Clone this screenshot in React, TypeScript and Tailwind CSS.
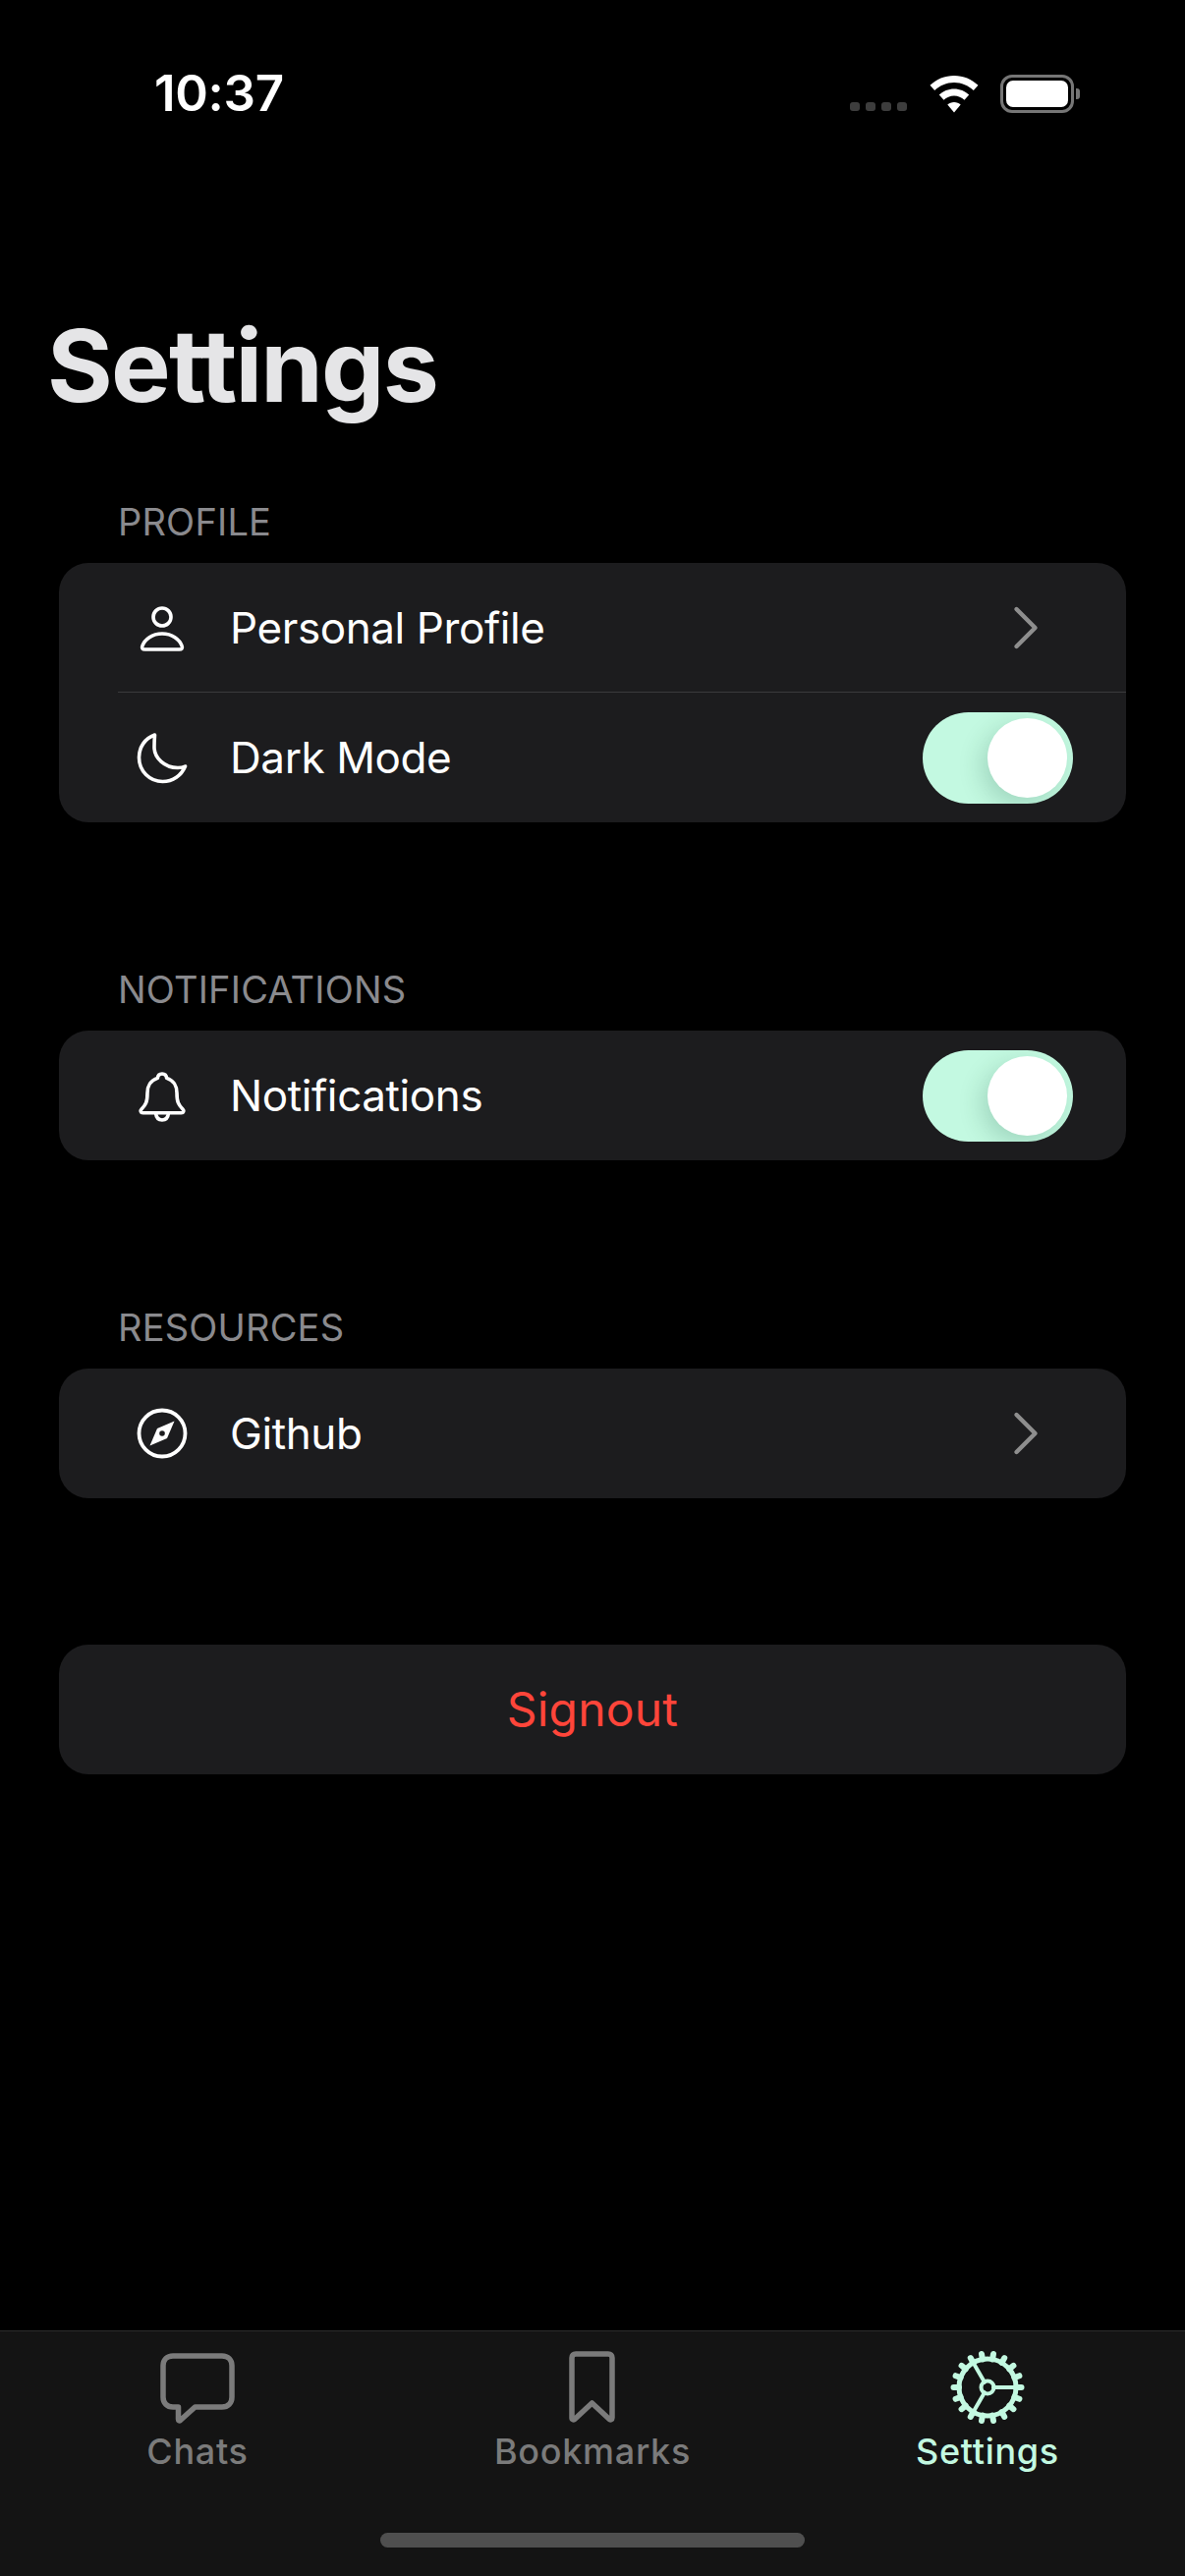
import React from "react";
import { ChevronRight } from "lucide-react";

const PersonIcon = () => (
  <svg width="60" height="60" viewBox="0 0 60 60" fill="none" stroke="#fff" strokeWidth="3.600">
    <circle cx="30" cy="19" r="9" />
    <path d="M12.500 52c-2.500 0-3.500-1.400-2.700-3.400C12.300 41.500 20 36 30 36s17.700 5.500 20.200 12.600c.8 2-.2 3.400-2.700 3.400z" />
  </svg>
);

const MoonIcon = () => (
  <svg width="60" height="60" viewBox="0 0 60 60" fill="none" stroke="#fff" strokeWidth="3.600" strokeLinejoin="round">
    <path d="M22.500 7C12.500 10.500 6.500 19.500 6.500 30c0 14 11 24.500 24 24.500 10.500 0 19-6 23-15.500-1.500.8-4.500 1.500-7.500 1.500-13.500 0-24-10-24-21 0-4.500 .2-8.500.5-12.500z" />
  </svg>
);

const BellIcon = () => (
  <svg width="60" height="60" viewBox="0 0 60 60" fill="none" stroke="#fff" strokeWidth="3.600" strokeLinejoin="round">
    <path d="M30 8c2.600 0 4.400 1.800 4.600 4.400C41.500 14.500 45 20.500 45 27.500c0 9 1.500 12 6 16.500 1.500 1.500 1 3.800-1.500 3.800h-39C8 47.800 7.500 45.500 9 44c4.500-4.500 6-7.500 6-16.500 0-7 3.500-13 10.400-15.100C25.600 9.800 27.400 8 30 8z" />
    <path d="M23.500 48c.5 4.500 3 7 6.500 7s6-2.500 6.500-7" />
  </svg>
);

const CompassIcon = () => (
  <svg width="60" height="60" viewBox="0 0 60 60" fill="none">
    <circle cx="30" cy="30" r="23.500" stroke="#fff" strokeWidth="3.800" />
    <path d="M42.500 17.500 L35 35 L17.500 42.500 L25 25 Z" fill="#fff" />
    <circle cx="30" cy="30" r="2.800" fill="#1c1c1e" />
  </svg>
);

const Toggle = () => (
  <div className="relative h-[93px] w-[153px] overflow-hidden rounded-full bg-[#c3f9e1]">
    <div className="absolute left-[66px] top-[6px] h-[81px] w-[81px] rounded-full bg-white shadow-[-6px_8px_24px_rgba(0,60,40,0.18)]" />
  </div>
);

const Row = ({ icon, label, right, divider }: { icon: React.ReactNode; label: string; right?: React.ReactNode; divider?: boolean }) => (
  <div className="relative flex h-[132px] items-center pl-[75px] pr-[54px]">
    {icon}
    <span className="ml-[39px] flex-1 text-[44px] tracking-[-0.4px] text-white">{label}</span>
    {right}
    {divider && <div className="absolute bottom-0 left-[60px] right-0 h-px bg-[#3a3a3c]" />}
  </div>
);

const Chevron = () => (
  <div className="mr-[18px] flex h-[60px] w-[60px] items-center justify-center">
    <ChevronRight size={76} strokeWidth={1.4} color="#8e8e8e" className="shrink-0" />
  </div>
);

const Section = ({ title, children }: { title: string; children: React.ReactNode }) => (
  <div>
    <div className="h-[66px] pl-[60px] text-[38px] leading-[48px] tracking-[0.2px] text-[#8a8a8e]">{title}</div>
    <div className="overflow-hidden rounded-[30px] bg-[#1c1c1e]">{children}</div>
  </div>
);

const gearAngles = Array.from({ length: 18 }, (_, i) => i * 20);

const GearIcon = () => (
  <svg width="76" height="76" viewBox="-38 -38 76 76" fill="none" stroke="#c3f9e1" strokeWidth="4.500" strokeLinecap="round">
    <circle r="29" strokeWidth="5" />
    {gearAngles.map((a) => (
      <path key={a} d="M29 0H34.500" strokeWidth="6" transform={`rotate(${a})`} />
    ))}
    <circle r="6.500" strokeWidth="4" />
    <path d="M6 0H28" strokeWidth="4" />
    <path d="M6 0H28" strokeWidth="4" transform="rotate(120)" />
    <path d="M6 0H28" strokeWidth="4" transform="rotate(240)" />
  </svg>
);

const ChatIcon = () => (
  <svg width="76" height="76" viewBox="0 0 76 76" fill="none" stroke="#7b7b7b" strokeWidth="5.500" strokeLinejoin="round">
    <path d="M13 6h50c6 0 10 4 10 10v32c0 6-4 10-10 10H35.500L20.500 71.500c-1 .8-2 .3-2-1V58H13c-6 0-10-4-10-10V16c0-6 4-10 10-10z" />
  </svg>
);

const BookmarkIcon = () => (
  <svg width="76" height="76" viewBox="0 0 76 76" fill="none" stroke="#7b7b7b" strokeWidth="5.500" strokeLinejoin="round">
    <path d="M21 4h33c2.500 0 4 1.500 4 4v61c0 1.800-1.800 2.500-3 1.300L37.500 54 20 70.300c-1.200 1.200-3 .5-3-1.300V8c0-2.500 1.500-4 4-4z" />
  </svg>
);

const Tab = ({ icon, label, active }: { icon: React.ReactNode; label: string; active?: boolean }) => (
  <div className="flex w-[402px] flex-col items-center">
    {icon}
    <span className={`mt-[5px] text-[36px] font-medium leading-[44px] tracking-[0.7px] ${active ? "text-[#c3f9e1]" : "text-[#7b7b7b]"}`}>
      {label}
    </span>
  </div>
);

export default function App() {
  return (
    <div className="flex h-[2622px] w-[1206px] flex-col bg-black font-['Inter','Liberation_Sans',sans-serif]">
      <div className="flex h-[310px] items-start justify-between pl-[157px] pr-[113px] pt-[64px]">
        <span className="text-[51px] font-semibold leading-[62px] tracking-[-0.3px] text-white">10:37</span>
        <div className="flex items-center pt-[12px]">
          <div className="mr-[23px] mt-[25px] flex gap-[6px]">
            <div className="h-[9px] w-[10px] rounded-[3px] bg-[#3d3d3d]" />
            <div className="h-[9px] w-[10px] rounded-[3px] bg-[#3d3d3d]" />
            <div className="h-[9px] w-[10px] rounded-[3px] bg-[#3d3d3d]" />
            <div className="h-[9px] w-[10px] rounded-[3px] bg-[#3d3d3d]" />
          </div>
          <svg width="50" height="38" viewBox="0 0 50 38" fill="#fff" className="mr-[22px]">
            <path d="M25 0c9.500 0 18 3.700 24.500 9.800L44.800 15C39.500 10 32.600 7 25 7S10.500 10 5.200 15L.5 9.800C7 3.700 15.500 0 25 0z" />
            <path d="M25 13.500c5.800 0 11.200 2.300 15.200 6.100l-4.700 5.200C32.700 22.100 29 20.500 25 20.500s-7.700 1.600-10.500 4.300l-4.700-5.200c4-3.800 9.400-6.100 15.200-6.100z" />
            <path d="M25 27c2.600 0 5 1 6.700 2.600L25 37.500l-6.700-7.900C20 28 22.400 27 25 27z" />
          </svg>
          <div className="relative flex h-[39px] w-[75px] items-center justify-center rounded-[12px] border-[3px] border-[#767676]">
            <div className="h-[27px] w-[63px] rounded-[7px] bg-white" />
            <div className="absolute -right-[9px] top-[11px] h-[11px] w-[4px] rounded-r-[3px] bg-[#767676]" />
          </div>
        </div>
      </div>

      <h1 className="h-[197px] pl-[48px] text-[102px] font-bold leading-[124px] tracking-[-1.8px] text-[#e5e5e7]">
        Settings
      </h1>

      <div className="flex flex-col px-[60px]">
        <Section title="PROFILE">
          <Row icon={<PersonIcon />} label="Personal Profile" right={<Chevron />} divider />
          <Row icon={<MoonIcon />} label="Dark Mode" right={<Toggle />} />
        </Section>
        <div className="h-[146px]" />
        <Section title="NOTIFICATIONS">
          <Row icon={<BellIcon />} label="Notifications" right={<Toggle />} />
        </Section>
        <div className="h-[146px]" />
        <Section title="RESOURCES">
          <Row icon={<CompassIcon />} label="Github" right={<Chevron />} />
        </Section>
        <div className="mt-[149px] flex h-[132px] items-center justify-center rounded-[30px] bg-[#1c1c1e] text-[48px] tracking-[0.2px] text-[#ff453a]">
          Signout
        </div>
      </div>

      <div className="mt-auto flex h-[250px] flex-col border-t border-[#2c2c2c] bg-[#141414]">
        <div className="flex pt-[19px]">
          <Tab icon={<ChatIcon />} label="Chats" />
          <Tab icon={<BookmarkIcon />} label="Bookmarks" />
          <Tab icon={<GearIcon />} label="Settings" active />
        </div>
        <div className="mx-auto mt-[61px] h-[15px] w-[432px] rounded-full bg-[#4f4f4f]" />
      </div>
    </div>
  );
}
